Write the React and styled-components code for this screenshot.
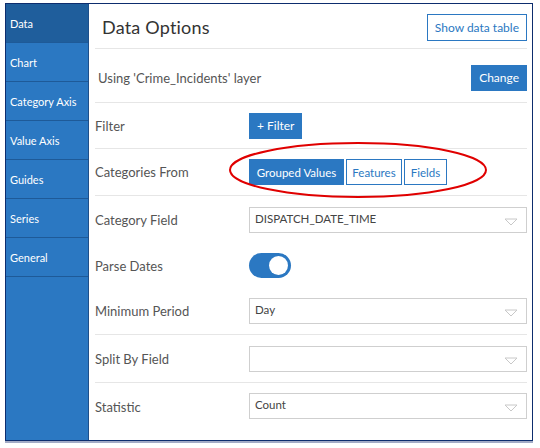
import React from 'react';
import styled, { createGlobalStyle } from 'styled-components';

const GlobalStyle = createGlobalStyle`
  html, body {
    margin: 0;
    padding: 0;
    background: #ffffff;
  }
  body {
    font-family: "Lato", "Noto Sans", sans-serif;
  }
`;

const Page = styled.div`
  width: 540px;
  height: 448px;
  padding: 3px 0 0 5px;
  box-sizing: border-box;
`;

const Frame = styled.div`
  position: relative;
  display: flex;
  width: 528px;
  height: 438px;
  box-sizing: border-box;
  border: 1px solid #0d2d6e;
  box-shadow: 0 2px 0 #a3abc6;
  background: #fff;
`;

const Sidebar = styled.nav`
  width: 83px;
  flex-shrink: 0;
  box-sizing: border-box;
  background: #2b78c2;
  border-right: 1px solid #1d4f8a;
  display: flex;
  flex-direction: column;
`;

const NavItem = styled.div`
  height: 39px;
  flex-shrink: 0;
  box-sizing: border-box;
  padding: 0 0 0 4px;
  display: flex;
  align-items: center;
  color: #fff;
  font-size: 11px;
  background: ${p => (p.$active ? '#1f5e9c' : 'transparent')};
  border-bottom: 1px solid #1e5a98;
`;

const Main = styled.main`
  flex: 1;
  padding: 0 5px 0 6px;
  display: flex;
  flex-direction: column;
`;

const Row = styled.div`
  height: ${p => p.$h}px;
  flex-shrink: 0;
  display: flex;
  align-items: ${p => (p.$top ? 'flex-start' : 'center')};
  box-sizing: border-box;
  border-bottom: ${p => (p.$line ? '1px solid #e6e6e6' : 'none')};
  padding-left: ${p => p.$indent || 0}px;
  padding-top: ${p => p.$pt || 0}px;
`;

const Title = styled.h1`
  flex: 1;
  margin: 0;
  font-weight: 400;
  font-size: 18px;
  color: #333;
  letter-spacing: 0.2px;
`;

const Text = styled.span`
  flex: 1;
  font-size: 13px;
  color: #555;
`;

const Label = styled.span`
  width: 154px;
  flex-shrink: 0;
  margin-top: ${p => p.$offset || 0}px;
  font-size: 13px;
  color: #555;
`;

const OutlineButton = styled.button`
  height: 27px;
  padding: 0 7px;
  border: 1px solid #2b78c2;
  background: #fff;
  color: #2b78c2;
  font-family: inherit;
  font-size: 12px;
  cursor: pointer;
`;

const SolidButton = styled.button`
  height: 26px;
  padding: 0 ${p => p.$pad || 8}px;
  border: 1px solid #2b78c2;
  background: #2b78c2;
  color: #fff;
  font-family: inherit;
  font-size: 12px;
  cursor: pointer;
`;

const Segmented = styled.div`
  display: flex;
  gap: 2px;
`;

const Segment = styled.button`
  height: 26px;
  width: ${p => p.$w}px;
  padding: 0;
  border: 1px solid #2b78c2;
  background: ${p => (p.$active ? '#2b78c2' : '#fff')};
  color: ${p => (p.$active ? '#fff' : '#2b78c2')};
  font-family: inherit;
  font-size: 11.5px;
`;

const Select = styled.div`
  flex: 1;
  height: 26px;
  box-sizing: border-box;
  border: 1px solid #cfcfcf;
  display: flex;
  align-items: center;
  justify-content: space-between;
  padding: 0 8px 3px 5px;
  font-size: 11.5px;
  color: #444;
`;

const Arrow = styled.svg`
  width: 14px;
  height: 8px;
  margin-top: 7px;
`;

const Toggle = styled.div`
  width: 42px;
  height: 25px;
  border-radius: 13px;
  background: #2b78c2;
  position: relative;
`;

const Knob = styled.div`
  position: absolute;
  right: 3px;
  top: 3px;
  width: 19px;
  height: 19px;
  border-radius: 50%;
  background: #fff;
`;

const Ellipse = styled.svg`
  position: absolute;
  left: 221px;
  top: 136px;
  width: 262px;
  height: 60px;
  pointer-events: none;
`;

function Dropdown({ value }) {
  return (
    <Select>
      <span>{value}</span>
      <Arrow viewBox="0 0 14 8">
        <path d="M1 1 L7 7 L13 1 Z" fill="none" stroke="#c8c8c8" strokeWidth="1" />
      </Arrow>
    </Select>
  );
}

const navItems = ['Data', 'Chart', 'Category Axis', 'Value Axis', 'Guides', 'Series', 'General'];

export default function App() {
  return (
    <Page>
      <GlobalStyle />
      <Frame>
        <Sidebar>
          {navItems.map((n, i) => (
            <NavItem key={n} $active={i === 0}>{n}</NavItem>
          ))}
        </Sidebar>
        <Main>
          <Row $h={45} $line $indent={7} $pt={2}>
            <Title>Data Options</Title>
            <OutlineButton>Show data table</OutlineButton>
          </Row>
          <Row $h={54} $line $indent={3} $pt={4}>
            <Text>Using 'Crime_Incidents' layer</Text>
            <SolidButton $pad={7}>Change</SolidButton>
          </Row>
          <Row $h={46} $line>
            <Label>Filter</Label>
            <SolidButton $pad={7}>+ Filter</SolidButton>
          </Row>
          <Row $h={47} $line>
            <Label>Categories From</Label>
            <Segmented>
              <Segment $active $w={95}>Grouped Values</Segment>
              <Segment $w={56}>Features</Segment>
              <Segment $w={43}>Fields</Segment>
            </Segmented>
          </Row>
          <Row $h={47}>
            <Label>Category Field</Label>
            <Dropdown value="DISPATCH_DATE_TIME" />
          </Row>
          <Row $h={45}>
            <Label>Parse Dates</Label>
            <Toggle><Knob /></Toggle>
          </Row>
          <Row $h={47} $line>
            <Label>Minimum Period</Label>
            <Dropdown value="Day" />
          </Row>
          <Row $h={48} $line>
            <Label>Split By Field</Label>
            <Dropdown value="" />
          </Row>
          <Row $h={54} $top $pt={10}>
            <Label $offset={6}>Statistic</Label>
            <Dropdown value="Count" />
          </Row>
        </Main>
        <Ellipse viewBox="0 0 262 60">
          <ellipse cx="131" cy="30" rx="128" ry="27" fill="none" stroke="#e00000" strokeWidth="2" />
        </Ellipse>
      </Frame>
    </Page>
  );
}
